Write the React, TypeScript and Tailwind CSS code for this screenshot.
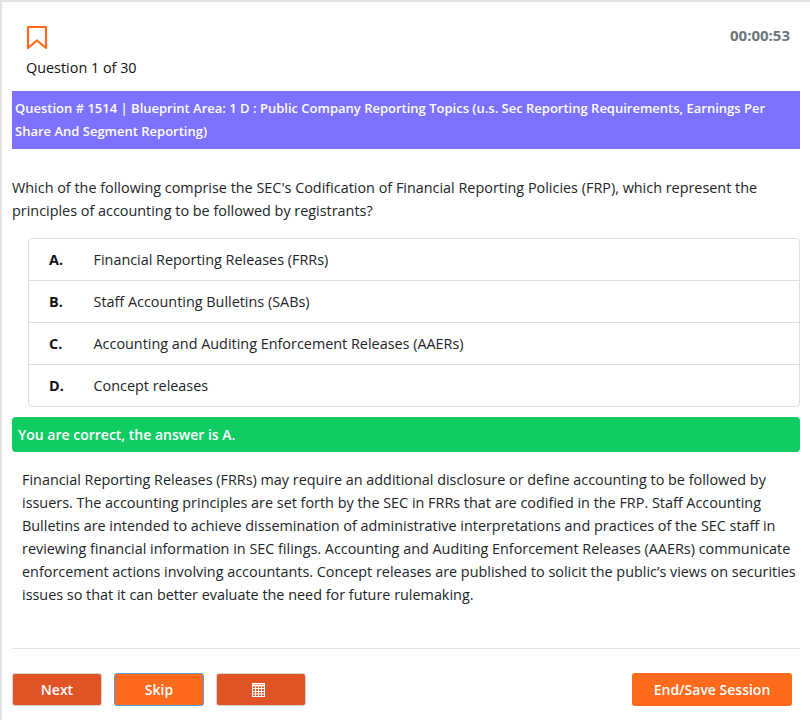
import React from 'react';

const options = [
  { letter: 'A.', text: 'Financial Reporting Releases (FRRs)' },
  { letter: 'B.', text: 'Staff Accounting Bulletins (SABs)' },
  { letter: 'C.', text: 'Accounting and Auditing Enforcement Releases (AAERs)' },
  { letter: 'D.', text: 'Concept releases' },
];

const App: React.FC = () => {
  return (
    <div className="h-[720px] w-[810px] overflow-hidden border-l-2 border-t-2 border-[#e3e3e3] bg-white font-['Open_Sans',sans-serif] text-[14.4px] text-[#212529]">
      <div className="flex items-start justify-between pl-[10px] pr-[20px]">
        <div className="pl-[14px] pt-[23px]">
          <svg width="22" height="25" viewBox="0 0 22 25" fill="none">
            <path d="M2 2h18v21l-9-7.5L2 23z" stroke="#ff6a1c" strokeWidth="2.2" strokeLinejoin="round" />
          </svg>
          <p className="mt-[8px] leading-[20px] text-[#111]">Question 1 of 30</p>
        </div>
        <div className="pt-[23px] text-[15px] font-bold leading-[20px] text-[#6c757d]">00:00:53</div>
      </div>

      <div className="ml-[10px] mr-[10px] mt-[13px] bg-[#7d72ff] py-[6px] pl-[3px] pr-[30px] text-[13px] font-semibold leading-[23px] text-white">
        Question # 1514 | Blueprint Area: 1 D : Public Company Reporting Topics (u.s. Sec Reporting Requirements, Earnings Per Share And Segment Reporting)
      </div>

      <p className="ml-[10px] mr-[30px] mt-[27px] leading-[23px] text-[#212529]">
        Which of the following comprise the SEC's Codification of Financial Reporting Policies (FRP), which represent the principles of accounting to be followed by registrants?
      </p>

      <div className="ml-[26px] mr-[10px] mt-[16px] rounded-[4px] border border-[#dfdfdf]">
        {options.map((o, i) => (
          <div key={o.letter} className={`flex items-center pl-[20px] ${i > 0 ? 'h-[42px] border-t border-[#dfdfdf]' : 'h-[41px]'}`}>
            <span className="w-[44.5px] font-bold text-[#111]">{o.letter}</span>
            <span>{o.text}</span>
          </div>
        ))}
      </div>

      <div className="ml-[10px] mr-[10px] mt-[10px] flex h-[35px] items-center rounded-[4px] bg-[#0fcc63] pl-[6px] text-[14px] font-semibold text-white">
        You are correct, the answer is A.
      </div>

      <p className="ml-[20px] mr-[10px] mt-[16px] leading-[23px]">
        Financial Reporting Releases (FRRs) may require an additional disclosure or define accounting to be followed by issuers. The accounting principles are set forth by the SEC in FRRs that are codified in the FRP. Staff Accounting Bulletins are intended to achieve dissemination of administrative interpretations and practices of the SEC staff in reviewing financial information in SEC filings. Accounting and Auditing Enforcement Releases (AAERs) communicate enforcement actions involving accountants. Concept releases are published to solicit the public’s views on securities issues so that it can better evaluate the need for future rulemaking.
      </p>

      <div className="ml-[10px] mr-[10px] mt-[42px] flex justify-between border-t border-[#e3e3e3] pr-[8px] pt-[24px] text-[14px]">
        <div className="flex gap-[12px]">
          <button className="h-[33px] w-[90px] rounded-[3px] border border-[#d5d5d5] bg-[#e05327] font-semibold text-white">Next</button>
          <button className="h-[33px] w-[90px] rounded-[3px] border border-[#4aa3e8] bg-[#ff6a1c] font-semibold text-white">Skip</button>
          <button className="flex h-[33px] w-[90px] items-center justify-center rounded-[3px] border border-[#d5d5d5] bg-[#e05327] pr-[6px]">
            <svg width="13" height="14" viewBox="0 0 13 14" fill="none" stroke="white" strokeWidth="1">
              <rect x="0.5" y="0.5" width="12" height="13" />
              <path d="M0.5 2.5h12" strokeWidth="2" />
              <path d="M0.5 5.5h12M0.5 8.5h12M0.5 11h12M3.5 4v10M6.5 4v10M9.5 4v10" />
            </svg>
          </button>
        </div>
        <button className="h-[33px] w-[160px] rounded-[3px] bg-[#ff6a1c] font-semibold text-white">End/Save Session</button>
      </div>
    </div>
  );
};

export default App;
